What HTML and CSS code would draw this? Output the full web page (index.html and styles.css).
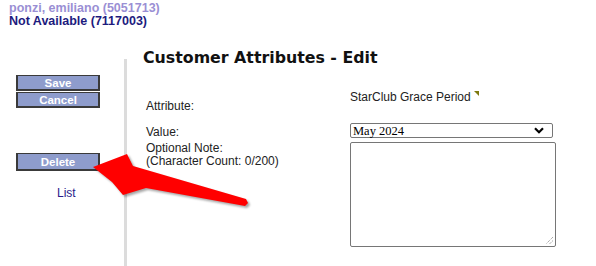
FILE: index.html
```html
<!DOCTYPE html>
<html>
<head>
<meta charset="utf-8">
<link rel="stylesheet" href="styles.css">
</head>
<body>
<div class="header">
  <div class="cust">ponzi, emiliano (5051713)</div>
  <div class="acct">Not Available (7117003)</div>
</div>
<div class="main">
  <div class="sidebar">
    <div class="btn-group">
      <button class="btn">Save</button>
      <button class="btn">Cancel</button>
    </div>
    <button class="btn btn-delete">Delete</button>
    <a class="list-link">List</a>
  </div>
  <div class="divider"></div>
  <div class="content">
    <h1 class="title">Customer Attributes - Edit</h1>
    <div class="form">
      <div class="label label-attr">Attribute:</div>
      <div class="value value-attr">StarClub Grace Period<span class="marker"></span></div>
      <div class="label label-value">Value:</div>
      <div class="value">
        <div class="select"><span>May 2024</span>
          <svg class="chev" width="10" height="7" viewBox="0 0 10 7"><path d="M1 1.2 L5 5.2 L9 1.2" fill="none" stroke="#000" stroke-width="2.2"/></svg>
        </div>
      </div>
      <div class="label label-note">Optional Note:<br>(Character Count: 0/200)</div>
      <div class="value">
        <div class="textarea">
          <svg class="grip" width="9" height="9" viewBox="0 0 9 9"><path d="M8 1 L1 8 M8 4.5 L4.5 8" stroke="#888" stroke-width="1" stroke-dasharray="1 1"/></svg>
        </div>
      </div>
    </div>
  </div>
</div>
<svg class="arrow" width="596" height="266" viewBox="0 0 596 266">
  <polygon points="93,167 127,154 133,166 246,199 248,203 245,206 146,188 123,195 112,182" fill="#ff0000"/>
</svg>
</body>
</html>
```

FILE: styles.css
```css
html, body {
  margin: 0;
  padding: 0;
  background: #fff;
}
body {
  width: 596px;
  height: 266px;
  overflow: hidden;
  position: relative;
  font-family: "Liberation Sans", Arial, sans-serif;
  font-size: 12px;
  color: #222;
}
.header {
  padding: 2px 0 0 9px;
  font-weight: bold;
  font-size: 12.5px;
  line-height: 13px;
}
.cust { color: #9a8fd4; }
.acct { color: #1d1b7e; }
.main {
  display: flex;
  margin-top: 16px;
  height: 222px;
}
.sidebar {
  width: 124px;
  padding-top: 31px;
  display: flex;
  flex-direction: column;
  align-items: flex-start;
}
.btn-group {
  display: flex;
  flex-direction: column;
  gap: 1px;
  margin-left: 16px;
}
.btn {
  width: 84px;
  height: 16px;
  margin: 0;
  padding: 0;
  background: #8e9ccc;
  border: 2px solid #3a3a3a;
  border-top-width: 1px;
  color: #fff;
  font-family: "Liberation Sans", Arial, sans-serif;
  font-weight: bold;
  font-size: 11.5px;
  line-height: 12px;
  text-align: center;
}
.btn-delete {
  margin: 45px 0 0 16px;
  height: 18px;
}
.list-link {
  margin: 15px 0 0 57px;
  color: #2a1b8a;
  font-size: 12px;
  line-height: 14px;
}
.divider {
  width: 3px;
  background: #dcdcdc;
  margin-top: 15px;
}
.content {
  padding-left: 16px;
}
.title {
  margin: 4px 0 0 0;
  font-size: 15.8px;
  line-height: 20px;
  font-weight: bold;
  color: #111;
  font-family: "DejaVu Sans", Verdana, sans-serif;
}
.form {
  margin: 22px 0 0 3px;
  display: grid;
  grid-template-columns: 204px 207px;
  grid-template-rows: 33px 19px auto;
}
.label {
  color: #222;
  line-height: 14px;
}
.label-attr { padding-top: 9px; }
.label-value { padding-top: 2px; }
.label-note { line-height: 13px; padding-top: 0; }
.value { line-height: 14px; }
.value-attr { position: relative; }
.marker {
  display: inline-block;
  width: 0;
  height: 0;
  border-top: 5px solid #7d7a10;
  border-left: 5px solid transparent;
  margin-left: 3px;
  vertical-align: top;
  margin-top: 1px;
}
.select {
  box-sizing: border-box;
  width: 203px;
  height: 15px;
  border: 1px solid #767676;
  border-radius: 2px;
  display: flex;
  align-items: center;
  justify-content: space-between;
  padding: 0 8px 0 2px;
  font-family: "Liberation Serif", "Times New Roman", serif;
  font-size: 12.5px;
  color: #000;
}
.chev { display: block; }
.textarea {
  box-sizing: border-box;
  width: 206px;
  height: 105px;
  border: 1px solid #767676;
  border-radius: 2px;
  position: relative;
}
.grip {
  position: absolute;
  right: 1px;
  bottom: 1px;
}
.arrow {
  position: absolute;
  left: 0;
  top: 0;
  pointer-events: none;
  filter: drop-shadow(2px 2px 1px rgba(0,0,0,0.35));
}
```
